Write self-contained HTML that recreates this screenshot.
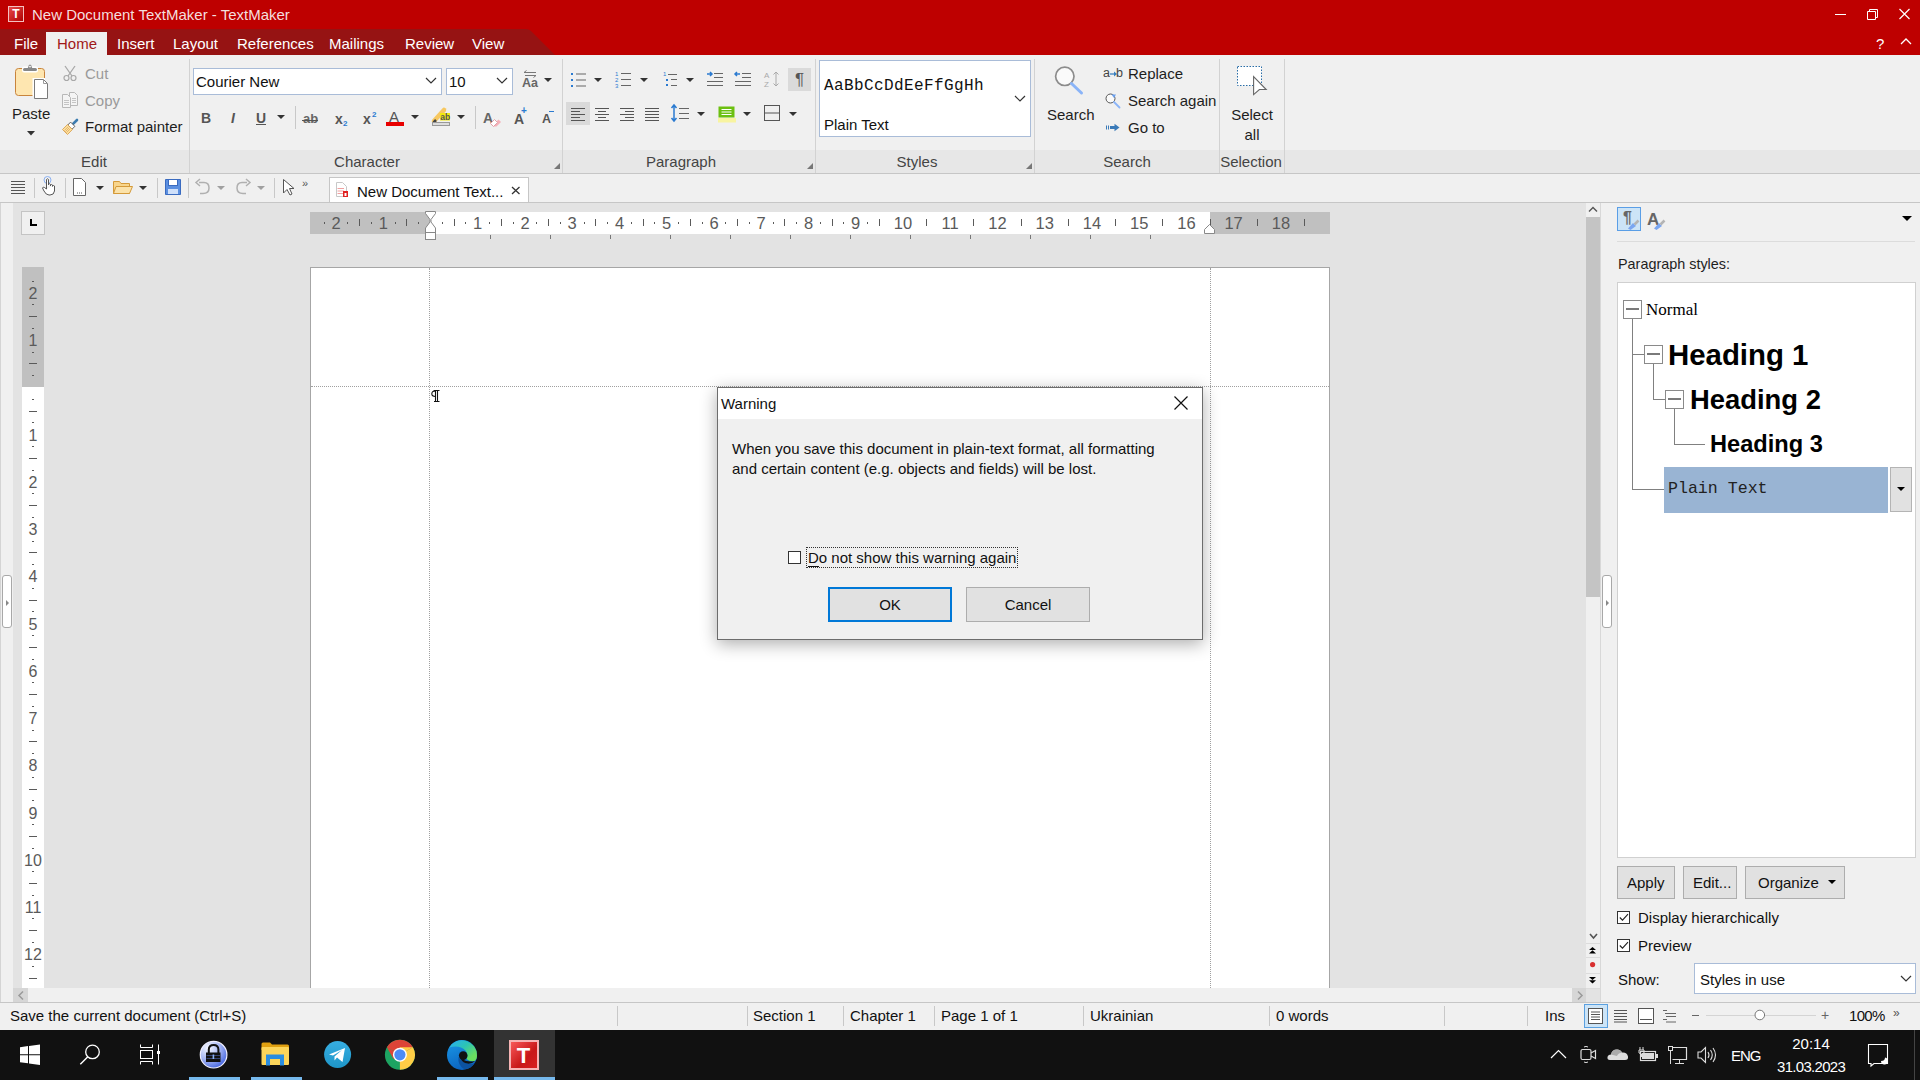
<!DOCTYPE html>
<html><head><meta charset="utf-8">
<style>
*{margin:0;padding:0;box-sizing:border-box}
html,body{width:1920px;height:1080px;overflow:hidden;background:#e3e3e3;font-family:"Liberation Sans",sans-serif;font-size:15px;color:#1e1e1e}
.a{position:absolute}
.t{position:absolute;white-space:nowrap;line-height:1}
svg{position:absolute;overflow:visible}
</style></head><body>
<!-- TITLE BAR -->
<div class="a" style="left:0;top:0;width:1920px;height:29px;background:#be0000"></div>
<!-- MENU ROW -->
<div class="a" style="left:0;top:29px;width:1920px;height:26px;background:#be0000"></div>
<svg style="left:0;top:29px" width="560" height="26"><path d="M0 0 H526 Q529 0 531 2 L555 26 H0Z" fill="#961313"/></svg>
<div class="a" style="left:46px;top:32px;width:61px;height:23px;background:#f0f0f0"></div>
<!-- RIBBON -->
<div class="a" style="left:0;top:55px;width:1920px;height:95px;background:#f0f0f0"></div>
<div class="a" style="left:0;top:150px;width:1920px;height:23px;background:#e7e7e7"></div>
<div class="a" style="left:0;top:173px;width:1920px;height:1px;background:#c6c6c6"></div>
<!-- QUICK TOOLBAR -->
<div class="a" style="left:0;top:174px;width:1920px;height:28px;background:#f0f0f0"></div>
<div class="a" style="left:0;top:202px;width:1920px;height:1px;background:#c6c6c6"></div>
<!-- STATUS BAR -->
<div class="a" style="left:0;top:1002px;width:1920px;height:1px;background:#c6c6c6"></div>
<div class="a" style="left:0;top:1003px;width:1920px;height:27px;background:#f0f0f0"></div>
<!-- TASKBAR -->
<div class="a" style="left:0;top:1030px;width:1920px;height:50px;background:#111111"></div>
<div class="a" style="left:8px;top:6px;width:16px;height:16px;background:linear-gradient(135deg,#e84a4a,#b00000);border:1px solid #f4c0c0"></div><div class="t" style="left:8px;top:8px;width:16px;text-align:center;font-size:12px;font-weight:bold;color:#fff">T</div>
<div class="t" style="left:32px;top:7.3px;font-size:15px;color:#f4dede;">New Document TextMaker - TextMaker</div>
<div class="t" style="left:14px;top:36.3px;font-size:15px;color:#ffffff;">File</div>
<div class="t" style="left:117px;top:36.3px;font-size:15px;color:#ffffff;">Insert</div>
<div class="t" style="left:173px;top:36.3px;font-size:15px;color:#ffffff;">Layout</div>
<div class="t" style="left:237px;top:36.3px;font-size:15px;color:#ffffff;">References</div>
<div class="t" style="left:329px;top:36.3px;font-size:15px;color:#ffffff;">Mailings</div>
<div class="t" style="left:405px;top:36.3px;font-size:15px;color:#ffffff;">Review</div>
<div class="t" style="left:472px;top:36.3px;font-size:15px;color:#ffffff;">View</div>
<div class="t" style="left:57px;top:36.3px;font-size:15px;color:#a01818;">Home</div>
<div class="t" style="left:1876px;top:36.3px;font-size:15px;color:#ffffff;">?</div>
<svg style="left:1830px;top:6px" width="90" height="20"><path d="M5 8.5H16" stroke="#fff" stroke-width="1"/><path d="M37.5 5.5h8v8h-8z M39.5 5.5v-2h8v8h-2" fill="none" stroke="#fff" stroke-width="1"/><path d="M69.5 3L79.5 13M79.5 3L69.5 13" stroke="#fff" stroke-width="1.2"/></svg>
<svg style="left:1900px;top:35px" width="20" height="12"><path d="M1 9L6 4L11 9" fill="none" stroke="#fff" stroke-width="1.3"/></svg>
<!-- RIBBON CONTENT -->
<div class="a" style="left:189px;top:59px;width:1px;height:114px;background:#d2d2d2"></div>
<div class="a" style="left:562px;top:59px;width:1px;height:114px;background:#d2d2d2"></div>
<div class="a" style="left:815px;top:59px;width:1px;height:114px;background:#d2d2d2"></div>
<div class="a" style="left:1034px;top:59px;width:1px;height:114px;background:#d2d2d2"></div>
<div class="a" style="left:1219px;top:59px;width:1px;height:114px;background:#d2d2d2"></div>
<div class="a" style="left:1284px;top:59px;width:1px;height:114px;background:#d2d2d2"></div>
<div class="t" style="left:-6.0px;top:154.3px;width:200px;text-align:center;font-size:15px;color:#444">Edit</div>
<div class="t" style="left:267.0px;top:154.3px;width:200px;text-align:center;font-size:15px;color:#444">Character</div>
<div class="t" style="left:581.0px;top:154.3px;width:200px;text-align:center;font-size:15px;color:#444">Paragraph</div>
<div class="t" style="left:817.0px;top:154.3px;width:200px;text-align:center;font-size:15px;color:#444">Styles</div>
<div class="t" style="left:1027.0px;top:154.3px;width:200px;text-align:center;font-size:15px;color:#444">Search</div>
<div class="t" style="left:1151.0px;top:154.3px;width:200px;text-align:center;font-size:15px;color:#444">Selection</div>
<svg style="left:553px;top:162px" width="8" height="8"><path d="M7 1V7H1Z" fill="#777"/></svg>
<svg style="left:806px;top:162px" width="8" height="8"><path d="M7 1V7H1Z" fill="#777"/></svg>
<svg style="left:1025px;top:162px" width="8" height="8"><path d="M7 1V7H1Z" fill="#777"/></svg>
<svg style="left:12px;top:62px" width="40" height="40">
<rect x="3.5" y="6.5" width="29" height="27" rx="3" fill="#fee6b0" stroke="#c8843c"/>
<rect x="10" y="4.5" width="16" height="6" rx="2" fill="#fff"/>
<rect x="11" y="6" width="14" height="3" rx="1.5" fill="#888"/><path d="M15.5 6.5L17 3.2Q18 2 19 3.2L20.5 6.5Z" fill="#888"/><circle cx="18" cy="4.6" r="0.9" fill="#fff"/>
<path d="M20.5 16H33V34.2H20.5Z" fill="#fff"/>
<path d="M22.5 17.5H31.5L35.5 21.5V36.5H22.5Z" fill="#fff" stroke="#7a7a7a"/><path d="M31.5 17.5V21.5H35.5" fill="none" stroke="#9a9a9a"/>
</svg>
<div class="t" style="left:12px;top:106.3px;font-size:15px;color:#1e1e1e;">Paste</div>
<svg style="left:27px;top:131px" width="8" height="5"><path d="M0 0H8L4 4.5Z" fill="#333"/></svg>
<svg style="left:62px;top:65px" width="16" height="16"><path d="M3 1L10 11M13 1L6 11" stroke="#a8a8a8" stroke-width="1.3" fill="none"/><circle cx="4.5" cy="13" r="2.5" fill="none" stroke="#a8a8a8" stroke-width="1.2"/><circle cx="11.5" cy="13" r="2.5" fill="none" stroke="#a8a8a8" stroke-width="1.2"/></svg>
<div class="t" style="left:85px;top:66.3px;font-size:15px;color:#9a9a9a;">Cut</div>
<svg style="left:62px;top:91px" width="18" height="18"><path d="M7.5 1.5H12.5L15.5 4.5V14.5H7.5Z" fill="#f4f4f4" stroke="#b8b8b8"/><path d="M0.5 3.5H5.5L8.5 6.5V16.5H0.5Z" fill="#f4f4f4" stroke="#b8b8b8"/><path d="M2 9.5H7M2 11.5H7M2 13.5H7M10 7.5H14M10 9.5H14M10 11.5H14" stroke="#c4c4c4"/></svg>
<div class="t" style="left:85px;top:93.3px;font-size:15px;color:#9a9a9a;">Copy</div>
<svg style="left:60px;top:118px" width="20" height="20"><path d="M17 2L12.8 6.2" stroke="#3c7cb0" stroke-width="2.6" stroke-linecap="round"/><path d="M10.6 4.1L14.9 8.4L12 11.2L7.8 7Z" fill="#fff" stroke="#555" stroke-width="0.9"/><path d="M7.5 6.6L12.4 11.5L7.5 16.5L2.5 11.5Z" fill="#fde2a0" stroke="#d9a050" stroke-width="0.9"/><path d="M8.2 8.7L4.3 12.6M9.2 9.8L5.3 13.7M10.3 10.8L6.4 14.7" stroke="#e0a860" stroke-width="0.8"/></svg>
<div class="t" style="left:85px;top:119.3px;font-size:15px;color:#1e1e1e;">Format painter</div>
<div class="a" style="left:193px;top:68px;width:249px;height:27px;background:#fff;border:1px solid #a9bcd8"></div>
<div class="t" style="left:196px;top:74.3px;font-size:15px;color:#111;">Courier New</div>
<svg style="left:425px;top:77px" width="12" height="8"><path d="M1 1L6 6L11 1" fill="none" stroke="#333" stroke-width="1.2"/></svg>
<div class="a" style="left:446px;top:68px;width:67px;height:27px;background:#fff;border:1px solid #a9bcd8"></div>
<div class="t" style="left:449px;top:74.3px;font-size:15px;color:#111;">10</div>
<svg style="left:496px;top:77px" width="12" height="8"><path d="M1 1L6 6L11 1" fill="none" stroke="#333" stroke-width="1.2"/></svg>
<div class="t" style="left:522px;top:76.5px;font-size:12.5px;font-weight:bold;color:#666">Aa</div><svg style="left:522px;top:70px" width="16" height="8"><path d="M2 2.5H14M2 2.5L4.5 0.5M3 5.5H14M14 5.5L11.5 7.5" stroke="#777" fill="none"/></svg>
<svg style="left:544px;top:78px" width="8" height="5"><path d="M0 0H8L4 4Z" fill="#333"/></svg>
<div class="t" style="left:201px;top:111px;font-size:14px;font-weight:bold;color:#555">B</div>
<div class="t" style="left:231px;top:111px;font-size:14px;font-weight:bold;font-style:italic;color:#555">I</div>
<div class="t" style="left:256px;top:111px;font-size:14px;font-weight:bold;color:#555">U</div><div class="a" style="left:256px;top:124px;width:10px;height:1px;background:#555"></div>
<svg style="left:277px;top:115px" width="8" height="5"><path d="M0 0H8L4 4Z" fill="#333"/></svg>
<svg style="left:411px;top:115px" width="8" height="5"><path d="M0 0H8L4 4Z" fill="#333"/></svg>
<svg style="left:457px;top:115px" width="8" height="5"><path d="M0 0H8L4 4Z" fill="#333"/></svg>
<div class="a" style="left:295px;top:106px;width:1px;height:23px;background:#c8c8c8"></div>
<div class="a" style="left:475px;top:106px;width:1px;height:23px;background:#c8c8c8"></div>
<div class="t" style="left:303px;top:112px;font-size:13px;font-weight:bold;color:#666">ab</div><div class="a" style="left:302px;top:120px;width:16px;height:1px;background:#555"></div>
<div class="t" style="left:335px;top:112px;font-size:14px;font-weight:bold;color:#555">x</div><div class="t" style="left:343px;top:120px;font-size:8px;font-weight:bold;color:#2a7ad0">2</div>
<div class="t" style="left:363px;top:112px;font-size:14px;font-weight:bold;color:#555">x</div><div class="t" style="left:372px;top:111px;font-size:8px;font-weight:bold;color:#2a7ad0">2</div>
<div class="t" style="left:389px;top:109px;font-size:15px;color:#555">A</div><div class="a" style="left:386px;top:122px;width:18px;height:3.5px;background:#e80000"></div>
<svg style="left:431px;top:107px" width="22" height="22"><path d="M3 14L13 3" stroke="#f7c860" stroke-width="4.5" stroke-linecap="round"/><path d="M2.5 15.5L5 13" stroke="#444" stroke-width="2.5"/><rect x="9" y="6" width="10" height="7.5" fill="#f2ea10"/><text x="9.2" y="12.8" font-size="8.5" font-weight="bold" font-family="Liberation Sans" fill="#555">ab</text><rect x="1.5" y="15.5" width="17" height="3" fill="#ddd" stroke="#999"/></svg>
<div class="t" style="left:483px;top:111px;font-size:14px;font-weight:bold;color:#666">A</div><svg style="left:488px;top:114px" width="14" height="14"><path d="M4.5 11.5L10.5 5.5L13 8L8.5 12.5H5.5Z" fill="#f4b0b8"/><path d="M2.5 9.5L6.5 5.5L9.5 8.5L5.5 12.5Z" fill="#fff" stroke="#e0a0a8"/></svg>
<div class="t" style="left:514px;top:112px;font-size:14px;font-weight:bold;color:#555">A</div><div class="t" style="left:521px;top:106px;font-size:10px;font-weight:bold;color:#2a7ad0">+</div>
<div class="t" style="left:542px;top:113px;font-size:12.5px;font-weight:bold;color:#555">A</div><div class="a" style="left:549px;top:111px;width:5px;height:1.2px;background:#2a7ad0"></div>
<!-- PARAGRAPH -->
<svg style="left:570px;top:72px" width="18" height="16"><g fill="#2a7ad0"><rect x="1" y="1" width="2" height="2"/><rect x="1" y="7" width="2" height="2"/><rect x="1" y="13" width="2" height="2"/></g><path d="M6 2H16M6 8H16M6 14H16" stroke="#666"/></svg>
<svg style="left:594px;top:78px" width="8" height="5"><path d="M0 0H8L4 4Z" fill="#333"/></svg>
<svg style="left:615px;top:70px" width="18" height="18"><text x="0" y="6" font-size="6" fill="#2a7ad0" font-family="Liberation Sans">1</text><text x="0" y="12" font-size="6" fill="#2a7ad0" font-family="Liberation Sans">2</text><text x="0" y="18" font-size="6" fill="#2a7ad0" font-family="Liberation Sans">3</text><path d="M6 3.5H16M6 9.5H16M6 15.5H16" stroke="#666"/></svg>
<svg style="left:640px;top:78px" width="8" height="5"><path d="M0 0H8L4 4Z" fill="#333"/></svg>
<svg style="left:662px;top:70px" width="18" height="18"><text x="1" y="6" font-size="6" fill="#2a7ad0" font-family="Liberation Sans">1</text><rect x="4" y="9" width="2" height="2" fill="#2a7ad0"/><rect x="4" y="14" width="2" height="2" fill="#2a7ad0"/><path d="M6 4.5H15M9 9.5H15M9 15.5H15" stroke="#666"/></svg>
<svg style="left:686px;top:78px" width="8" height="5"><path d="M0 0H8L4 4Z" fill="#333"/></svg>
<svg style="left:706px;top:71px" width="18" height="16"><path d="M1 3H6M4 1L6 3L4 5" stroke="#2a7ad0" stroke-width="1.5" fill="none"/><path d="M8 2.5H17M8 6.5H17M1 10.5H17M1 14.5H17" stroke="#666"/></svg>
<svg style="left:734px;top:71px" width="18" height="16"><path d="M6 3H1M3 1L1 3L3 5" stroke="#2a7ad0" stroke-width="1.5" fill="none"/><path d="M8 2.5H17M8 6.5H17M1 10.5H17M1 14.5H17" stroke="#666"/></svg>
<svg style="left:764px;top:70px" width="18" height="18"><text x="0" y="8" font-size="8" fill="#aaa" font-family="Liberation Sans">A</text><text x="0" y="17" font-size="8" fill="#aaa" font-family="Liberation Sans">Z</text><path d="M12 2V16M9.5 4.5L12 2L14.5 4.5M9.5 13.5L12 16L14.5 13.5" stroke="#aaa" fill="none"/></svg>
<div class="a" style="left:788px;top:68px;width:23px;height:23px;background:#dadada"></div>
<div class="t" style="left:795px;top:71px;font-size:17px;color:#555">&#182;</div>
<div class="a" style="left:566px;top:102px;width:24px;height:23px;background:#dadada"></div>
<svg style="left:571px;top:107px" width="14" height="14"><path d="M0 1.5H14M0 4.5H9M0 7.5H14M0 10.5H9M0 13.5H14" stroke="#555"/></svg>
<svg style="left:595px;top:107px" width="14" height="14"><path d="M0 1.5H14M3 4.5H11M0 7.5H14M3 10.5H11M0 13.5H14" stroke="#555"/></svg>
<svg style="left:620px;top:107px" width="14" height="14"><path d="M0 1.5H14M5 4.5H14M0 7.5H14M5 10.5H14M0 13.5H14" stroke="#555"/></svg>
<svg style="left:645px;top:107px" width="14" height="14"><path d="M0 1.5H14M0 4.5H14M0 7.5H14M0 10.5H14M0 13.5H14" stroke="#555"/></svg>
<svg style="left:670px;top:104px" width="20" height="18"><path d="M4 1V17M1.5 4L4 1L6.5 4M1.5 14L4 17L6.5 14" stroke="#2a7ad0" stroke-width="1.5" fill="none"/><path d="M9 4.5H19M9 9.5H19M9 14.5H19" stroke="#666"/></svg>
<svg style="left:697px;top:112px" width="8" height="5"><path d="M0 0H8L4 4Z" fill="#333"/></svg>
<svg style="left:717px;top:104px" width="20" height="20"><rect x="1.5" y="2.5" width="16" height="11" fill="#6cc010"/><path d="M4.5 5.5H14.5M4.5 8H14.5M4.5 10.5H14.5" stroke="#fff"/><rect x="1" y="14" width="18" height="4.5" fill="#f8f4a0"/></svg>
<svg style="left:743px;top:112px" width="8" height="5"><path d="M0 0H8L4 4Z" fill="#333"/></svg>
<svg style="left:764px;top:105px" width="18" height="18"><rect x="0.5" y="0.5" width="15" height="15" fill="none" stroke="#555"/><path d="M0.5 8H15.5" stroke="#555"/></svg>
<svg style="left:789px;top:112px" width="8" height="5"><path d="M0 0H8L4 4Z" fill="#333"/></svg>
<div class="a" style="left:819px;top:60px;width:212px;height:77px;background:#fff;border:1px solid #a9bcd8"></div>
<div class="t" style="left:824px;top:78.0px;font-size:16px;letter-spacing:0.4px;font-family:'Liberation Mono';color:#111">AaBbCcDdEeFfGgHh</div>
<div class="t" style="left:824px;top:117.3px;font-size:15px;color:#111;">Plain Text</div>
<svg style="left:1014px;top:95px" width="12" height="8"><path d="M1 1L6 6L11 1" fill="none" stroke="#333" stroke-width="1.2"/></svg>
<svg style="left:1050px;top:64px" width="36" height="36"><circle cx="14.8" cy="12.3" r="9.2" fill="#fafafa" stroke="#8c8c8c" stroke-width="1.7"/><path d="M21.5 19.5L31.5 29" stroke="#8ab4f8" stroke-width="3" stroke-linecap="round"/></svg>
<div class="t" style="left:1047px;top:107.3px;font-size:15px;color:#1e1e1e;">Search</div>
<div class="t" style="left:1103px;top:66.5px;font-size:12.5px;color:#444">a</div><svg style="left:1110px;top:70px" width="8" height="8"><path d="M0 4H5" stroke="#3a80c0" stroke-width="1.3"/><path d="M4 1.5L7 4L4 6.5Z" fill="#3a80c0"/></svg><div class="t" style="left:1116px;top:66.5px;font-size:12.5px;color:#444">b</div>
<div class="t" style="left:1128px;top:66.3px;font-size:15px;color:#1e1e1e;">Replace</div>
<svg style="left:1104px;top:92px" width="18" height="18"><circle cx="6.5" cy="6.5" r="4.5" fill="#fafafa" stroke="#555" stroke-width="1"/><path d="M10 10L15.5 15.5" stroke="#8ab4f8" stroke-width="1.8" stroke-linecap="round"/><path d="M7.5 2.5L12 2.5L10 6Z" fill="#6aa0f0"/></svg>
<div class="t" style="left:1128px;top:93.3px;font-size:15px;color:#1e1e1e;">Search again</div>
<svg style="left:1104px;top:122px" width="18" height="12"><path d="M2.5 3.5V7.5M4.5 3.5V7.5" stroke="#3a7ab8" stroke-width="1"/><path d="M6 5.5H11" stroke="#3a7ab8" stroke-width="3"/><path d="M10.5 1.8L15.5 5.5L10.5 9.2Z" fill="#3a7ab8"/></svg>
<div class="t" style="left:1128px;top:120.3px;font-size:15px;color:#1e1e1e;">Go to</div>
<svg style="left:1236px;top:65px" width="34" height="34"><rect x="1.5" y="1.5" width="24" height="19" fill="#fff" stroke="#2a6ea8" stroke-dasharray="1.5 1.5"/><path d="M17.6 11.7V29.6L23.4 24.5H30.2Z" fill="#fff" stroke="#666" stroke-width="1.1" stroke-linejoin="miter"/></svg>
<div class="t" style="left:1221px;top:107.3px;width:62px;text-align:center;font-size:15px">Select</div>
<div class="t" style="left:1221px;top:127.3px;width:62px;text-align:center;font-size:15px">all</div>
<!-- QUICK TOOLBAR -->
<svg style="left:11px;top:180px" width="14" height="14"><path d="M0 1.5H14M0 4.5H14M0 7.5H14M0 10.5H14M0 13.5H14" stroke="#555"/></svg>
<div class="a" style="left:34px;top:178px;width:1px;height:20px;background:#c8c8c8"></div>
<div class="a" style="left:65px;top:178px;width:1px;height:20px;background:#c8c8c8"></div>
<div class="a" style="left:157px;top:178px;width:1px;height:20px;background:#c8c8c8"></div>
<div class="a" style="left:188px;top:178px;width:1px;height:20px;background:#c8c8c8"></div>
<div class="a" style="left:274px;top:178px;width:1px;height:20px;background:#c8c8c8"></div>
<svg style="left:41px;top:176px" width="16" height="20"><circle cx="6.5" cy="4" r="3.5" fill="none" stroke="#8ab0f0" stroke-width="1"/><path d="M5.5 13V3.5Q6.5 2 7.5 3.5V9M7.5 8.5Q8.5 7 9.5 8.5V10M9.5 9Q10.5 8 11.5 9V10.5M11.5 10Q12.5 9 13.5 10V15Q13 19 9 19H8Q5 19 3 15L1.5 12Q2 10.5 3.5 11.5L5.5 13" fill="#fff" stroke="#555" stroke-width="1"/></svg>
<svg style="left:73px;top:178px" width="14" height="18"><path d="M0.5 0.5H8.5L12.5 4.5V17.5H0.5Z" fill="#fff" stroke="#666"/><path d="M4 15H5M6 15H7M8 15H9" stroke="#555"/></svg>
<svg style="left:96px;top:186px" width="8" height="5"><path d="M0 0H8L4 4Z" fill="#333"/></svg>
<svg style="left:113px;top:179px" width="20" height="16"><path d="M0.5 2.5H6.5L8 4.5H16.5V14.5H0.5Z" fill="#f8d58c" stroke="#d49a3a"/><path d="M3 7.5H19.5L16.5 14.5H0.5Z" fill="#fbe2a9" stroke="#d49a3a"/></svg>
<svg style="left:139px;top:186px" width="8" height="5"><path d="M0 0H8L4 4Z" fill="#333"/></svg>
<svg style="left:165px;top:179px" width="16" height="16"><path d="M0.5 0.5H15.5V15.5H0.5Z" fill="#5b8fe0" stroke="#3a6bc0"/><rect x="3.5" y="0.5" width="9" height="6" fill="#fff" stroke="#3a6bc0"/><rect x="3" y="10" width="10" height="5" fill="#cfe0fa"/></svg>
<svg style="left:194px;top:178px" width="18" height="18"><path d="M5 4.5H10Q15 4.5 15 10Q15 15.5 9 15.5H6" fill="none" stroke="#b0b0b0" stroke-width="1.5"/><path d="M6 1L2 4.5L6 8" fill="none" stroke="#b0b0b0" stroke-width="1.5"/></svg>
<svg style="left:217px;top:186px" width="8" height="5"><path d="M0 0H8L4 4Z" fill="#a0a0a0"/></svg>
<svg style="left:234px;top:178px" width="18" height="18"><path d="M13 4.5H8Q3 4.5 3 10Q3 15.5 9 15.5H12" fill="none" stroke="#b0b0b0" stroke-width="1.5"/><path d="M12 1L16 4.5L12 8" fill="none" stroke="#b0b0b0" stroke-width="1.5"/></svg>
<svg style="left:257px;top:186px" width="8" height="5"><path d="M0 0H8L4 4Z" fill="#a0a0a0"/></svg>
<svg style="left:282px;top:178px" width="14" height="18"><path d="M1.5 1.5V15L5 11.5L8 17L10 16L7.5 10.5H12Z" fill="#fff" stroke="#555"/></svg>
<div class="t" style="left:302px;top:178px;font-size:11px;color:#555">&#187;</div>
<div class="a" style="left:329px;top:177px;width:200px;height:25px;background:#fff;border:1px solid #c6c6c6;border-bottom:none"></div>
<svg style="left:335px;top:182px" width="16" height="18"><path d="M1.5 0.5H7.5L11.5 4.5V14.5H1.5Z" fill="#fff" stroke="#c8c8c8"/><path d="M2.5 6.5H9M2.5 9H9M2.5 11.5H8" stroke="#f0a0a0"/><rect x="8" y="9" width="5" height="6" fill="#e02020"/><rect x="9.5" y="11" width="2" height="3" fill="#fff"/></svg>
<div class="t" style="left:357px;top:184.3px;font-size:15px;color:#111;">New Document Text...</div>
<svg style="left:511px;top:186px" width="10" height="10"><path d="M1 1L8.5 8M8.5 1L1 8" stroke="#333" stroke-width="1.3"/></svg>
<!-- WORKSPACE -->
<div class="a" style="left:0;top:203px;width:13px;height:799px;background:#f0f0f0;border-left:1px solid #d4d4d4"></div>
<div class="a" style="left:2px;top:575px;width:10px;height:53px;background:#fff;border:1px solid #a8a8a8;border-radius:3px"></div>
<svg style="left:6px;top:600px" width="4" height="6"><path d="M0 0L3 3L0 6Z" fill="#888"/></svg>
<div class="a" style="left:21px;top:211px;width:24px;height:24px;background:#f0f0f0;border:1px solid #c4c4c4"></div>
<svg style="left:30px;top:219px" width="8" height="8"><path d="M1 0V6H7" fill="none" stroke="#000" stroke-width="2"/></svg>
<div class="a" style="left:310px;top:212px;width:1020px;height:22px;background:#c0c0c0"></div>
<div class="a" style="left:430px;top:212px;width:780px;height:22px;background:#fff"></div>
<div class="t" style="left:321.0px;top:214.5px;width:30px;text-align:center;font-size:16.5px;color:#5a5a5a">2</div>
<div class="t" style="left:368.3px;top:214.5px;width:30px;text-align:center;font-size:16.5px;color:#5a5a5a">1</div>
<div class="t" style="left:462.7px;top:214.5px;width:30px;text-align:center;font-size:16.5px;color:#5a5a5a">1</div>
<div class="t" style="left:510.0px;top:214.5px;width:30px;text-align:center;font-size:16.5px;color:#5a5a5a">2</div>
<div class="t" style="left:557.2px;top:214.5px;width:30px;text-align:center;font-size:16.5px;color:#5a5a5a">3</div>
<div class="t" style="left:604.5px;top:214.5px;width:30px;text-align:center;font-size:16.5px;color:#5a5a5a">4</div>
<div class="t" style="left:651.7px;top:214.5px;width:30px;text-align:center;font-size:16.5px;color:#5a5a5a">5</div>
<div class="t" style="left:699.0px;top:214.5px;width:30px;text-align:center;font-size:16.5px;color:#5a5a5a">6</div>
<div class="t" style="left:746.2px;top:214.5px;width:30px;text-align:center;font-size:16.5px;color:#5a5a5a">7</div>
<div class="t" style="left:793.5px;top:214.5px;width:30px;text-align:center;font-size:16.5px;color:#5a5a5a">8</div>
<div class="t" style="left:840.7px;top:214.5px;width:30px;text-align:center;font-size:16.5px;color:#5a5a5a">9</div>
<div class="t" style="left:887.9px;top:214.5px;width:30px;text-align:center;font-size:16.5px;color:#5a5a5a">10</div>
<div class="t" style="left:935.2px;top:214.5px;width:30px;text-align:center;font-size:16.5px;color:#5a5a5a">11</div>
<div class="t" style="left:982.4px;top:214.5px;width:30px;text-align:center;font-size:16.5px;color:#5a5a5a">12</div>
<div class="t" style="left:1029.7px;top:214.5px;width:30px;text-align:center;font-size:16.5px;color:#5a5a5a">13</div>
<div class="t" style="left:1076.9px;top:214.5px;width:30px;text-align:center;font-size:16.5px;color:#5a5a5a">14</div>
<div class="t" style="left:1124.2px;top:214.5px;width:30px;text-align:center;font-size:16.5px;color:#5a5a5a">15</div>
<div class="t" style="left:1171.4px;top:214.5px;width:30px;text-align:center;font-size:16.5px;color:#5a5a5a">16</div>
<div class="t" style="left:1218.6px;top:214.5px;width:30px;text-align:center;font-size:16.5px;color:#5a5a5a">17</div>
<div class="t" style="left:1265.9px;top:214.5px;width:30px;text-align:center;font-size:16.5px;color:#5a5a5a">18</div>
<div class="a" style="left:324px;top:222px;width:1px;height:2px;background:#5a5a5a"></div>
<div class="a" style="left:347px;top:222px;width:1px;height:2px;background:#5a5a5a"></div>
<div class="a" style="left:359px;top:219px;width:1px;height:7px;background:#5a5a5a"></div>
<div class="a" style="left:371px;top:222px;width:1px;height:2px;background:#5a5a5a"></div>
<div class="a" style="left:395px;top:222px;width:1px;height:2px;background:#5a5a5a"></div>
<div class="a" style="left:406px;top:219px;width:1px;height:7px;background:#5a5a5a"></div>
<div class="a" style="left:418px;top:222px;width:1px;height:2px;background:#5a5a5a"></div>
<div class="a" style="left:442px;top:222px;width:1px;height:2px;background:#5a5a5a"></div>
<div class="a" style="left:454px;top:219px;width:1px;height:7px;background:#5a5a5a"></div>
<div class="a" style="left:465px;top:222px;width:1px;height:2px;background:#5a5a5a"></div>
<div class="a" style="left:489px;top:222px;width:1px;height:2px;background:#5a5a5a"></div>
<div class="a" style="left:501px;top:219px;width:1px;height:7px;background:#5a5a5a"></div>
<div class="a" style="left:513px;top:222px;width:1px;height:2px;background:#5a5a5a"></div>
<div class="a" style="left:536px;top:222px;width:1px;height:2px;background:#5a5a5a"></div>
<div class="a" style="left:548px;top:219px;width:1px;height:7px;background:#5a5a5a"></div>
<div class="a" style="left:560px;top:222px;width:1px;height:2px;background:#5a5a5a"></div>
<div class="a" style="left:584px;top:222px;width:1px;height:2px;background:#5a5a5a"></div>
<div class="a" style="left:595px;top:219px;width:1px;height:7px;background:#5a5a5a"></div>
<div class="a" style="left:607px;top:222px;width:1px;height:2px;background:#5a5a5a"></div>
<div class="a" style="left:631px;top:222px;width:1px;height:2px;background:#5a5a5a"></div>
<div class="a" style="left:643px;top:219px;width:1px;height:7px;background:#5a5a5a"></div>
<div class="a" style="left:654px;top:222px;width:1px;height:2px;background:#5a5a5a"></div>
<div class="a" style="left:678px;top:222px;width:1px;height:2px;background:#5a5a5a"></div>
<div class="a" style="left:690px;top:219px;width:1px;height:7px;background:#5a5a5a"></div>
<div class="a" style="left:702px;top:222px;width:1px;height:2px;background:#5a5a5a"></div>
<div class="a" style="left:725px;top:222px;width:1px;height:2px;background:#5a5a5a"></div>
<div class="a" style="left:737px;top:219px;width:1px;height:7px;background:#5a5a5a"></div>
<div class="a" style="left:749px;top:222px;width:1px;height:2px;background:#5a5a5a"></div>
<div class="a" style="left:773px;top:222px;width:1px;height:2px;background:#5a5a5a"></div>
<div class="a" style="left:784px;top:219px;width:1px;height:7px;background:#5a5a5a"></div>
<div class="a" style="left:796px;top:222px;width:1px;height:2px;background:#5a5a5a"></div>
<div class="a" style="left:820px;top:222px;width:1px;height:2px;background:#5a5a5a"></div>
<div class="a" style="left:832px;top:219px;width:1px;height:7px;background:#5a5a5a"></div>
<div class="a" style="left:843px;top:222px;width:1px;height:2px;background:#5a5a5a"></div>
<div class="a" style="left:867px;top:222px;width:1px;height:2px;background:#5a5a5a"></div>
<div class="a" style="left:879px;top:219px;width:1px;height:7px;background:#5a5a5a"></div>
<div class="a" style="left:926px;top:219px;width:1px;height:7px;background:#5a5a5a"></div>
<div class="a" style="left:973px;top:219px;width:1px;height:7px;background:#5a5a5a"></div>
<div class="a" style="left:1021px;top:219px;width:1px;height:7px;background:#5a5a5a"></div>
<div class="a" style="left:1068px;top:219px;width:1px;height:7px;background:#5a5a5a"></div>
<div class="a" style="left:1115px;top:219px;width:1px;height:7px;background:#5a5a5a"></div>
<div class="a" style="left:1162px;top:219px;width:1px;height:7px;background:#5a5a5a"></div>
<div class="a" style="left:1210px;top:219px;width:1px;height:7px;background:#5a5a5a"></div>
<div class="a" style="left:1257px;top:219px;width:1px;height:7px;background:#5a5a5a"></div>
<div class="a" style="left:1304px;top:219px;width:1px;height:7px;background:#5a5a5a"></div>
<div class="a" style="left:490px;top:235px;width:1px;height:4px;background:#777"></div>
<div class="a" style="left:550px;top:235px;width:1px;height:4px;background:#777"></div>
<div class="a" style="left:610px;top:235px;width:1px;height:4px;background:#777"></div>
<div class="a" style="left:670px;top:235px;width:1px;height:4px;background:#777"></div>
<div class="a" style="left:730px;top:235px;width:1px;height:4px;background:#777"></div>
<div class="a" style="left:790px;top:235px;width:1px;height:4px;background:#777"></div>
<div class="a" style="left:850px;top:235px;width:1px;height:4px;background:#777"></div>
<div class="a" style="left:910px;top:235px;width:1px;height:4px;background:#777"></div>
<div class="a" style="left:970px;top:235px;width:1px;height:4px;background:#777"></div>
<div class="a" style="left:1030px;top:235px;width:1px;height:4px;background:#777"></div>
<div class="a" style="left:1090px;top:235px;width:1px;height:4px;background:#777"></div>
<div class="a" style="left:1150px;top:235px;width:1px;height:4px;background:#777"></div>
<svg style="left:425px;top:210px" width="12" height="32"><path d="M0.5 1.5H10.5V3.5L6 9.5V12L10.5 18V22.5H0.5V18L5 12V9.5L0.5 3.5Z" fill="#fff" stroke="#888"/><rect x="0.5" y="22.5" width="10" height="7" fill="#fff" stroke="#888"/></svg>
<svg style="left:1204px;top:224px" width="12" height="12"><path d="M5.5 0.5L10.5 5.5V9.5H0.5V5.5Z" fill="#fff" stroke="#888"/></svg>
<div class="a" style="left:22px;top:267px;width:22px;height:120px;background:#c0c0c0"></div>
<div class="a" style="left:22px;top:387px;width:22px;height:601px;background:#fff"></div>
<div class="t" style="left:20px;top:285.9px;width:26px;text-align:center;font-size:16px;color:#5a5a5a">2</div>
<div class="t" style="left:20px;top:333.2px;width:26px;text-align:center;font-size:16px;color:#5a5a5a">1</div>
<div class="t" style="left:20px;top:427.6px;width:26px;text-align:center;font-size:16px;color:#5a5a5a">1</div>
<div class="t" style="left:20px;top:474.9px;width:26px;text-align:center;font-size:16px;color:#5a5a5a">2</div>
<div class="t" style="left:20px;top:522.1px;width:26px;text-align:center;font-size:16px;color:#5a5a5a">3</div>
<div class="t" style="left:20px;top:569.4px;width:26px;text-align:center;font-size:16px;color:#5a5a5a">4</div>
<div class="t" style="left:20px;top:616.6px;width:26px;text-align:center;font-size:16px;color:#5a5a5a">5</div>
<div class="t" style="left:20px;top:663.9px;width:26px;text-align:center;font-size:16px;color:#5a5a5a">6</div>
<div class="t" style="left:20px;top:711.1px;width:26px;text-align:center;font-size:16px;color:#5a5a5a">7</div>
<div class="t" style="left:20px;top:758.4px;width:26px;text-align:center;font-size:16px;color:#5a5a5a">8</div>
<div class="t" style="left:20px;top:805.6px;width:26px;text-align:center;font-size:16px;color:#5a5a5a">9</div>
<div class="t" style="left:20px;top:852.8px;width:26px;text-align:center;font-size:16px;color:#5a5a5a">10</div>
<div class="t" style="left:20px;top:900.1px;width:26px;text-align:center;font-size:16px;color:#5a5a5a">11</div>
<div class="t" style="left:20px;top:947.3px;width:26px;text-align:center;font-size:16px;color:#5a5a5a">12</div>
<div class="a" style="left:32px;top:281px;width:2px;height:1px;background:#5a5a5a"></div>
<div class="a" style="left:32px;top:304px;width:2px;height:1px;background:#5a5a5a"></div>
<div class="a" style="left:29px;top:316px;width:8px;height:1px;background:#5a5a5a"></div>
<div class="a" style="left:32px;top:328px;width:2px;height:1px;background:#5a5a5a"></div>
<div class="a" style="left:32px;top:352px;width:2px;height:1px;background:#5a5a5a"></div>
<div class="a" style="left:29px;top:363px;width:8px;height:1px;background:#5a5a5a"></div>
<div class="a" style="left:32px;top:375px;width:2px;height:1px;background:#5a5a5a"></div>
<div class="a" style="left:32px;top:399px;width:2px;height:1px;background:#5a5a5a"></div>
<div class="a" style="left:29px;top:411px;width:8px;height:1px;background:#5a5a5a"></div>
<div class="a" style="left:32px;top:422px;width:2px;height:1px;background:#5a5a5a"></div>
<div class="a" style="left:32px;top:446px;width:2px;height:1px;background:#5a5a5a"></div>
<div class="a" style="left:29px;top:458px;width:8px;height:1px;background:#5a5a5a"></div>
<div class="a" style="left:32px;top:470px;width:2px;height:1px;background:#5a5a5a"></div>
<div class="a" style="left:32px;top:493px;width:2px;height:1px;background:#5a5a5a"></div>
<div class="a" style="left:29px;top:505px;width:8px;height:1px;background:#5a5a5a"></div>
<div class="a" style="left:32px;top:517px;width:2px;height:1px;background:#5a5a5a"></div>
<div class="a" style="left:32px;top:541px;width:2px;height:1px;background:#5a5a5a"></div>
<div class="a" style="left:29px;top:552px;width:8px;height:1px;background:#5a5a5a"></div>
<div class="a" style="left:32px;top:564px;width:2px;height:1px;background:#5a5a5a"></div>
<div class="a" style="left:32px;top:588px;width:2px;height:1px;background:#5a5a5a"></div>
<div class="a" style="left:29px;top:600px;width:8px;height:1px;background:#5a5a5a"></div>
<div class="a" style="left:32px;top:611px;width:2px;height:1px;background:#5a5a5a"></div>
<div class="a" style="left:32px;top:635px;width:2px;height:1px;background:#5a5a5a"></div>
<div class="a" style="left:29px;top:647px;width:8px;height:1px;background:#5a5a5a"></div>
<div class="a" style="left:32px;top:659px;width:2px;height:1px;background:#5a5a5a"></div>
<div class="a" style="left:32px;top:682px;width:2px;height:1px;background:#5a5a5a"></div>
<div class="a" style="left:29px;top:694px;width:8px;height:1px;background:#5a5a5a"></div>
<div class="a" style="left:32px;top:706px;width:2px;height:1px;background:#5a5a5a"></div>
<div class="a" style="left:32px;top:730px;width:2px;height:1px;background:#5a5a5a"></div>
<div class="a" style="left:29px;top:741px;width:8px;height:1px;background:#5a5a5a"></div>
<div class="a" style="left:32px;top:753px;width:2px;height:1px;background:#5a5a5a"></div>
<div class="a" style="left:32px;top:777px;width:2px;height:1px;background:#5a5a5a"></div>
<div class="a" style="left:29px;top:789px;width:8px;height:1px;background:#5a5a5a"></div>
<div class="a" style="left:32px;top:800px;width:2px;height:1px;background:#5a5a5a"></div>
<div class="a" style="left:32px;top:824px;width:2px;height:1px;background:#5a5a5a"></div>
<div class="a" style="left:29px;top:836px;width:8px;height:1px;background:#5a5a5a"></div>
<div class="a" style="left:32px;top:848px;width:2px;height:1px;background:#5a5a5a"></div>
<div class="a" style="left:32px;top:871px;width:2px;height:1px;background:#5a5a5a"></div>
<div class="a" style="left:29px;top:883px;width:8px;height:1px;background:#5a5a5a"></div>
<div class="a" style="left:32px;top:895px;width:2px;height:1px;background:#5a5a5a"></div>
<div class="a" style="left:32px;top:918px;width:2px;height:1px;background:#5a5a5a"></div>
<div class="a" style="left:29px;top:930px;width:8px;height:1px;background:#5a5a5a"></div>
<div class="a" style="left:32px;top:942px;width:2px;height:1px;background:#5a5a5a"></div>
<div class="a" style="left:32px;top:966px;width:2px;height:1px;background:#5a5a5a"></div>
<div class="a" style="left:29px;top:978px;width:8px;height:1px;background:#5a5a5a"></div>
<div class="a" style="left:32px;top:989px;width:2px;height:1px;background:#5a5a5a"></div>
<div class="a" style="left:310px;top:267px;width:1020px;height:721px;background:#fff;border:1px solid #a6a6a6;border-bottom:none"></div>
<div class="a" style="left:429px;top:268px;width:0;height:720px;border-left:1px dotted #a0a0a0"></div>
<div class="a" style="left:1210px;top:268px;width:0;height:720px;border-left:1px dotted #a0a0a0"></div>
<div class="a" style="left:311px;top:386px;width:1018px;height:0;border-top:1px dotted #a0a0a0"></div>
<svg style="left:430px;top:389px" width="12" height="14"><path d="M3.5 1.5H9.5M4 12.5H9.5M5.5 1.5V12.5M7.5 1.5V12.5M5.5 2Q1.8 2 1.8 4.8Q1.8 7.5 5.5 7.5" fill="none" stroke="#111" stroke-width="1.1"/></svg>
<div class="a" style="left:13px;top:988px;width:1573px;height:14px;background:#f0f0f0"></div>
<div class="a" style="left:13px;top:988px;width:15px;height:14px;background:#d6d6d6"></div>
<svg style="left:17px;top:991px" width="8" height="9"><path d="M6 0.5L2 4.5L6 8.5" fill="none" stroke="#999" stroke-width="1.5"/></svg>
<div class="a" style="left:1572px;top:988px;width:14px;height:14px;background:#d6d6d6"></div>
<svg style="left:1576px;top:991px" width="8" height="9"><path d="M2 0.5L6 4.5L2 8.5" fill="none" stroke="#999" stroke-width="1.5"/></svg>
<div class="a" style="left:1586px;top:203px;width:14px;height:785px;background:#f0f0f0"></div>
<div class="a" style="left:1586px;top:217px;width:14px;height:380px;background:#c4c4c4"></div>
<svg style="left:1588px;top:206px" width="10" height="7"><path d="M1 5.5L5 1.5L9 5.5" fill="none" stroke="#555" stroke-width="1.4"/></svg>
<svg style="left:1589px;top:933px" width="10" height="7"><path d="M1 1L4.5 5L8 1" fill="none" stroke="#555" stroke-width="1.6"/></svg>
<div class="a" style="left:1586px;top:943px;width:14px;height:1px;background:#dcdcdc"></div>
<div class="a" style="left:1586px;top:957px;width:14px;height:1px;background:#dcdcdc"></div>
<div class="a" style="left:1586px;top:973px;width:14px;height:1px;background:#dcdcdc"></div>
<div class="a" style="left:1586px;top:988px;width:14px;height:1px;background:#dcdcdc"></div>
<svg style="left:1589px;top:947px" width="8" height="8"><path d="M3.5 0L7 3H0Z M3.5 3.2L7 6.5H0Z" fill="#000"/></svg>
<svg style="left:1589px;top:961px" width="8" height="8"><circle cx="3.6" cy="3.6" r="2.6" fill="#d83030"/></svg>
<svg style="left:1589px;top:977px" width="8" height="8"><path d="M0 0H7L3.5 3Z M0 3.3H7L3.5 6.5Z" fill="#000"/></svg>
<div class="a" style="left:1600px;top:203px;width:14px;height:799px;background:#f0f0f0;border-left:1px solid #d8d8d8"></div>
<div class="a" style="left:1602px;top:575px;width:10px;height:53px;background:#fff;border:1px solid #a8a8a8;border-radius:3px"></div>
<svg style="left:1606px;top:600px" width="4" height="6"><path d="M0 0L3 3L0 6Z" fill="#888"/></svg>
<div class="a" style="left:1614px;top:203px;width:306px;height:799px;background:#f0f0f0"></div>
<!-- RIGHT PANEL -->
<div class="a" style="left:1617px;top:207px;width:24px;height:24px;background:#cce4f7;border:1px solid #5a9ee6"></div>
<div class="t" style="left:1623px;top:210px;font-size:16px;font-weight:bold;color:#666">&#182;</div>
<svg style="left:1626px;top:217px" width="14" height="14"><path d="M2 11.5L7 6L10 9L4.5 13Z" fill="#7aa6f0"/><path d="M8.5 7.5L12.5 3.5" stroke="#b4b4b4" stroke-width="2.5"/></svg>
<div class="t" style="left:1647px;top:211px;font-size:17px;font-weight:bold;color:#666">A</div>
<svg style="left:1652px;top:217px" width="14" height="14"><path d="M2 11.5L7 6L10 9L4.5 13Z" fill="#7aa6f0"/><path d="M8.5 7.5L12.5 3.5" stroke="#b4b4b4" stroke-width="2.5"/></svg>
<svg style="left:1902px;top:216px" width="10" height="6"><path d="M0 0H10L5 5Z" fill="#000"/></svg>
<div class="a" style="left:1617px;top:241px;width:298px;height:1px;background:#dcdcdc"></div>
<div class="t" style="left:1618px;top:256.8px;font-size:14.4px;color:#1e1e1e;">Paragraph styles:</div>
<div class="a" style="left:1617px;top:282px;width:299px;height:576px;background:#fff;border:1px solid #d0d0d0"></div>
<div class="a" style="left:1632px;top:319px;width:1px;height:171px;background:#808080"></div>
<div class="a" style="left:1632px;top:354px;width:12px;height:1px;background:#808080"></div>
<div class="a" style="left:1632px;top:489px;width:32px;height:1px;background:#808080"></div>
<div class="a" style="left:1653px;top:364px;width:1px;height:36px;background:#808080"></div>
<div class="a" style="left:1653px;top:399px;width:12px;height:1px;background:#808080"></div>
<div class="a" style="left:1674px;top:409px;width:1px;height:36px;background:#808080"></div>
<div class="a" style="left:1674px;top:444px;width:31px;height:1px;background:#808080"></div>
<div class="a" style="left:1623px;top:300px;width:19px;height:19px;background:#fff;border:1px solid #8a8a8a"></div><div class="a" style="left:1626px;top:308px;width:13px;height:2px;background:#7a7a7a"></div>
<div class="a" style="left:1644px;top:345px;width:19px;height:19px;background:#fff;border:1px solid #8a8a8a"></div><div class="a" style="left:1647px;top:353px;width:13px;height:2px;background:#7a7a7a"></div>
<div class="a" style="left:1665px;top:390px;width:19px;height:19px;background:#fff;border:1px solid #8a8a8a"></div><div class="a" style="left:1668px;top:398px;width:13px;height:2px;background:#7a7a7a"></div>
<div class="t" style="left:1646px;top:300.6px;font-size:17px;color:#000;font-family:'Liberation Serif'">Normal</div>
<div class="t" style="left:1668px;top:340.1px;font-size:29.4px;color:#000;font-weight:bold">Heading 1</div>
<div class="t" style="left:1690px;top:385.8px;font-size:27.4px;color:#000;font-weight:bold">Heading 2</div>
<div class="t" style="left:1710px;top:433.0px;font-size:23.6px;color:#000;font-weight:bold">Heading 3</div>
<div class="a" style="left:1664px;top:467px;width:224px;height:46px;background:#99b4d3"></div>
<div class="t" style="left:1668px;top:481.4px;font-size:16.6px;color:#222;font-family:'Liberation Mono'">Plain Text</div>
<div class="a" style="left:1890px;top:467px;width:22px;height:45px;background:#e1e1e1;border:1px solid #b4b4b4"></div>
<svg style="left:1897px;top:487px" width="8" height="5"><path d="M0 0H8L4 4Z" fill="#000"/></svg>
<div class="a" style="left:1617px;top:866px;width:58px;height:33px;background:#e1e1e1;border:1px solid #adadad"></div>
<div class="t" style="left:1627px;top:875.3px;font-size:15px;color:#111;">Apply</div>
<div class="a" style="left:1683px;top:866px;width:54px;height:33px;background:#e1e1e1;border:1px solid #adadad"></div>
<div class="t" style="left:1693px;top:875.3px;font-size:15px;color:#111;">Edit...</div>
<div class="a" style="left:1745px;top:866px;width:100px;height:33px;background:#e1e1e1;border:1px solid #adadad"></div>
<div class="t" style="left:1758px;top:875.3px;font-size:15px;color:#111;">Organize</div>
<svg style="left:1828px;top:880px" width="8" height="5"><path d="M0 0H8L4 4Z" fill="#000"/></svg>
<div class="a" style="left:1617px;top:911px;width:13px;height:13px;background:#fff;border:1px solid #333"></div><svg style="left:1619px;top:913px" width="10" height="9"><path d="M0.8 4.5L3.5 7.2L9 1.2" fill="none" stroke="#222" stroke-width="1.1"/></svg>
<div class="a" style="left:1617px;top:939px;width:13px;height:13px;background:#fff;border:1px solid #333"></div><svg style="left:1619px;top:941px" width="10" height="9"><path d="M0.8 4.5L3.5 7.2L9 1.2" fill="none" stroke="#222" stroke-width="1.1"/></svg>
<div class="t" style="left:1638px;top:910.3px;font-size:15px;color:#111;">Display hierarchically</div>
<div class="t" style="left:1638px;top:938.3px;font-size:15px;color:#111;">Preview</div>
<div class="t" style="left:1618px;top:972.3px;font-size:15px;color:#111;">Show:</div>
<div class="a" style="left:1694px;top:963px;width:222px;height:31px;background:#fff;border:1px solid #a9bcd8"></div>
<div class="t" style="left:1700px;top:972.3px;font-size:15px;color:#111;">Styles in use</div>
<svg style="left:1900px;top:975px" width="12" height="8"><path d="M1 1L6 6L11 1" fill="none" stroke="#333" stroke-width="1.2"/></svg>
<!-- STATUS BAR -->
<div class="t" style="left:10px;top:1008.3px;font-size:15px;color:#111;">Save the current document (Ctrl+S)</div>
<div class="a" style="left:617px;top:1006px;width:1px;height:20px;background:#c8c8c8"></div>
<div class="a" style="left:747px;top:1006px;width:1px;height:20px;background:#c8c8c8"></div>
<div class="a" style="left:843px;top:1006px;width:1px;height:20px;background:#c8c8c8"></div>
<div class="a" style="left:934px;top:1006px;width:1px;height:20px;background:#c8c8c8"></div>
<div class="a" style="left:1083px;top:1006px;width:1px;height:20px;background:#c8c8c8"></div>
<div class="a" style="left:1269px;top:1006px;width:1px;height:20px;background:#c8c8c8"></div>
<div class="a" style="left:1444px;top:1006px;width:1px;height:20px;background:#c8c8c8"></div>
<div class="a" style="left:1527px;top:1006px;width:1px;height:20px;background:#c8c8c8"></div>
<div class="t" style="left:753px;top:1008.3px;font-size:15px;color:#111;">Section 1</div>
<div class="t" style="left:850px;top:1008.3px;font-size:15px;color:#111;">Chapter 1</div>
<div class="t" style="left:941px;top:1008.3px;font-size:15px;color:#111;">Page 1 of 1</div>
<div class="t" style="left:1090px;top:1008.3px;font-size:15px;color:#111;">Ukrainian</div>
<div class="t" style="left:1276px;top:1008.3px;font-size:15px;color:#111;">0 words</div>
<div class="t" style="left:1545px;top:1008.3px;font-size:15px;color:#111;">Ins</div>
<div class="a" style="left:1584px;top:1004px;width:24px;height:24px;background:#cce4f7;border:1px solid #5aa0e0"></div>
<svg style="left:1588px;top:1008px" width="16" height="16"><rect x="0.5" y="0.5" width="14" height="15" fill="#fff" stroke="#555"/><path d="M3 4H12M3 6.5H12M3 9H12M3 11.5H12" stroke="#555"/></svg>
<svg style="left:1614px;top:1009px" width="14" height="14"><path d="M0 1.5H13M0 4.5H13M0 7.5H13M0 10.5H13M0 13H13" stroke="#555"/></svg>
<svg style="left:1638px;top:1008px" width="16" height="16"><rect x="0.5" y="0.5" width="15" height="15" fill="#fff" stroke="#555"/><path d="M2 11.5H14" stroke="#555"/></svg>
<svg style="left:1663px;top:1009px" width="14" height="14"><path d="M0 1.5H4M2 4.5H13M3 7.5H13M0 10.5H4M3 13H13" stroke="#666"/></svg>
<div class="a" style="left:1692px;top:1015px;width:7px;height:1px;background:#666"></div>
<div class="a" style="left:1706px;top:1015px;width:110px;height:1px;background:#d4d4d4"></div>
<svg style="left:1753px;top:1008px" width="14" height="14"><circle cx="6.8" cy="7" r="4.8" fill="#fff" stroke="#777"/></svg>
<div class="t" style="left:1821px;top:1008px;font-size:14px;color:#666">+</div>
<div class="t" style="left:1849px;top:1008.3px;font-size:15px;color:#111;letter-spacing:-0.7px">100%</div>
<div class="t" style="left:1893px;top:1007px;font-size:12px;color:#555">&#187;</div>
<!-- TASKBAR -->
<svg style="left:19px;top:1044px" width="22" height="22"><path d="M1 3.2L9 2.1V10.2H1Z M10 2L21 0.5V10.2H10Z M1 11.2H9V19.3L1 18.2Z M10 11.2H21V20.9L10 19.4Z" fill="#fff"/></svg>
<svg style="left:78px;top:1043px" width="24" height="24"><circle cx="14.5" cy="8.9" r="6.8" fill="none" stroke="#fff" stroke-width="1.3"/><path d="M9.8 13.8L2.3 21.3" stroke="#fff" stroke-width="1.4"/></svg>
<svg style="left:139px;top:1044px" width="22" height="22"><path d="M1.5 0.5V3.5H13.5V0.5 M1.5 20.5V17.5H13.5V20.5 M19.5 0.5V20.5" fill="none" stroke="#fff" stroke-width="1"/><rect x="1.5" y="6.5" width="12" height="8" fill="none" stroke="#fff" stroke-width="1"/><rect x="18" y="7" width="3" height="3" fill="#fff"/></svg>
<svg style="left:199px;top:1040px" width="30" height="30"><defs><radialGradient id="kp" cx="0.3" cy="0.25" r="0.85"><stop offset="0" stop-color="#f6f8ff"/><stop offset="0.5" stop-color="#a8b8f4"/><stop offset="1" stop-color="#3c5ee0"/></radialGradient></defs><circle cx="14.6" cy="14.7" r="13.3" fill="url(#kp)" stroke="#f0f0ff" stroke-width="1.2"/><path d="M9.8 13V9.6Q9.8 5 14.6 5Q19.4 5 19.4 9.6V13" fill="none" stroke="#111" stroke-width="2"/><rect x="7" y="12.5" width="14.5" height="9.5" fill="#111"/><path d="M7.5 15.5H21M7.5 18.5H21" stroke="#3a4a80" stroke-width="0.9"/><rect x="13.6" y="14.5" width="1.6" height="4.5" fill="#8ab0f0"/></svg>
<div class="a" style="left:189px;top:1077px;width:51px;height:3px;background:#76b9ed"></div>
<svg style="left:261px;top:1042px" width="30" height="26"><path d="M0.5 2Q0.5 0.5 2 0.5H9L11 2.5H26.5Q28 2.5 28 4V8H0.5Z" fill="#e0a010"/><rect x="0.5" y="5" width="27.5" height="18" rx="1" fill="#fcd55a"/><path d="M5 23.5V12.5H23V23.5H19V17H9V23.5Z" fill="#2a8de0"/></svg>
<div class="a" style="left:251px;top:1077px;width:51px;height:3px;background:#76b9ed"></div>
<svg style="left:323px;top:1040px" width="30" height="30"><defs><linearGradient id="tg" x1="0" y1="0" x2="0" y2="1"><stop offset="0" stop-color="#37aee2"/><stop offset="1" stop-color="#1e96c8"/></linearGradient></defs><circle cx="14.6" cy="14.5" r="13.5" fill="url(#tg)"/><path d="M6 14.5L22 8L19.5 22L14 17.5L11.5 20.5V16.5L19 10L10 15.5Z" fill="#fff"/></svg>
<svg style="left:384px;top:1039px" width="32" height="32"><circle cx="15.9" cy="15.8" r="15" fill="#1da462"/><path d="M15.9 15.8L2.9 8.3A15 15 0 0 1 28.9 8.3Z" fill="#dd4437"/><path d="M15.9 15.8L28.9 8.3A15 15 0 0 1 15.9 30.8Z" fill="#ffcd46"/><path d="M15.9 15.8L2.9 8.3L9.5 20Z" fill="#dd4437"/><path d="M15.9 15.8L28.9 8.3H15.9Z" fill="#ffcd46"/><circle cx="15.9" cy="15.8" r="7" fill="#fff"/><circle cx="15.9" cy="15.8" r="5.6" fill="#4c8bf5"/></svg>
<svg style="left:447px;top:1040px" width="30" height="30"><defs><linearGradient id="eg1" x1="0.1" y1="0" x2="0.9" y2="0.7"><stop offset="0" stop-color="#29b0ec"/><stop offset="0.5" stop-color="#2cc4b4"/><stop offset="1" stop-color="#6ae060"/></linearGradient><linearGradient id="eg2" x1="0" y1="0" x2="0.4" y2="1"><stop offset="0" stop-color="#1a9ae8"/><stop offset="1" stop-color="#0c64c0"/></linearGradient></defs><circle cx="15" cy="15" r="15" fill="url(#eg2)"/><path d="M2.2 7.5A15 15 0 0 1 30 15.5Q30 19.5 27.5 21Q23 22 19.5 19Q21.5 15 18.5 10.5Q12.5 4.5 2.2 7.5Z" fill="url(#eg1)"/><path d="M11.5 17Q10.5 25 17 29Q23 29.5 27.5 23.5Q22 25 17.5 22.5Q13 20 11.5 17Z" fill="#0c52a0"/><circle cx="16.2" cy="15.6" r="4.3" fill="#111"/><path d="M15.5 19.5Q21 22.5 28 21Q25.5 23.7 21.5 23.7Q16.5 23.5 13.5 19Z" fill="#111"/></svg>
<div class="a" style="left:437px;top:1077px;width:51px;height:3px;background:#76b9ed"></div>
<div class="a" style="left:494px;top:1030px;width:61px;height:50px;background:#333333"></div>
<div class="a" style="left:509px;top:1040px;width:30px;height:30px;background:linear-gradient(135deg,#f85858,#c81818 60%,#d82020);border:2px solid #f6b4b4"></div>
<div class="t" style="left:508px;top:1045px;width:31px;text-align:center;font-size:22px;font-weight:bold;color:#fff">T</div>
<div class="a" style="left:494px;top:1077px;width:61px;height:3px;background:#76b9ed"></div>
<svg style="left:1550px;top:1049px" width="18" height="10"><path d="M1 9L8.5 1.5L16 9" fill="none" stroke="#fff" stroke-width="1.2"/></svg>
<svg style="left:1580px;top:1045px" width="18" height="20"><rect x="1" y="4.5" width="10" height="10" rx="1.5" fill="none" stroke="#ddd" stroke-width="1.2"/><path d="M11 8L15.5 5.5V13.5L11 11" fill="none" stroke="#ddd" stroke-width="1.2"/><path d="M4 2Q6 0.8 8 2M4 17Q6 18.2 8 17" fill="none" stroke="#ddd"/></svg>
<svg style="left:1607px;top:1046px" width="22" height="16"><path d="M3 14Q0 14 0.5 11Q1 8.5 4 8.5Q5 3.5 10 3.5Q13.5 3.5 15 6.5Q20 6 21 10.5Q21.5 14 18 14Z" fill="#ddd"/><path d="M4 8.5Q5 3.5 10 3.5Q13.5 3.5 15 6.5Q11 7 10 10Z" fill="#aaa"/></svg>
<svg style="left:1637px;top:1046px" width="22" height="18"><path d="M3 1V4M6 1V4M2 4H7V7Q4.5 9 2 7Z M4.5 8V11" stroke="#ddd" fill="none"/><rect x="3.5" y="5.5" width="15" height="9" fill="none" stroke="#ddd" stroke-width="1.2"/><rect x="5" y="7" width="12" height="6" fill="#ddd"/><rect x="19" y="8" width="2" height="4" fill="#ddd"/></svg>
<svg style="left:1667px;top:1045px" width="22" height="20"><rect x="1.5" y="1.5" width="4" height="4" fill="none" stroke="#ddd"/><path d="M3.5 5.5V19" stroke="#ddd"/><path d="M5.5 2.5H19.5V14.5H5.5" fill="none" stroke="#ddd" stroke-width="1.2"/><path d="M12.5 14.5V18M8 18.5H17" stroke="#ddd"/></svg>
<svg style="left:1697px;top:1045px" width="22" height="20"><path d="M1 7H4L8.5 2.5V17.5L4 13H1Z" fill="none" stroke="#ddd" stroke-width="1.1"/><path d="M11 7Q13 10 11 13M13.5 5Q17 10 13.5 15M16 3Q21 10 16 17" fill="none" stroke="#ddd" stroke-width="1.1"/></svg>
<div class="t" style="left:1731px;top:1048.3px;font-size:15px;color:#fff;letter-spacing:-1px">ENG</div>
<div class="t" style="left:1776px;top:1036.3px;width:70px;text-align:center;font-size:15px;color:#fff">20:14</div>
<div class="t" style="left:1777px;top:1059.3px;font-size:15px;color:#fff;letter-spacing:-0.7px">31.03.2023</div>
<svg style="left:1868px;top:1044px" width="24" height="22"><path d="M0.5 0.5H19.5V19.5H6L3 22V19.5H0.5Z" fill="none" stroke="#fff" stroke-width="1.1"/><path d="M17 13.5A3.5 3.5 0 1 1 13 17Q17 17 17 13.5Z" fill="#fff"/></svg>
<div class="a" style="left:1914px;top:1030px;width:1px;height:50px;background:#444"></div>
<!-- DIALOG -->
<div class="a" style="left:717px;top:387px;width:486px;height:253px;background:#f0f0f0;border:1px solid #6c6c6c;box-shadow:0 4px 16px rgba(0,0,0,0.32)"></div>
<div class="a" style="left:718px;top:388px;width:484px;height:31px;background:#fff"></div>
<div class="t" style="left:721px;top:396.3px;font-size:15px;color:#111;">Warning</div>
<svg style="left:1174px;top:396px" width="14" height="14"><path d="M0.5 0.5L13.5 13.5M13.5 0.5L0.5 13.5" stroke="#111" stroke-width="1.2"/></svg>
<div class="t" style="left:732px;top:441.3px;font-size:15px;color:#111;">When you save this document in plain-text format, all formatting</div>
<div class="t" style="left:732px;top:461.3px;font-size:15px;color:#111;">and certain content (e.g. objects and fields) will be lost.</div>
<div class="a" style="left:788px;top:551px;width:13px;height:13px;background:#fff;border:1px solid #333"></div>
<div class="a" style="left:806px;top:547px;width:212px;height:21px;border:1px dotted #333"></div>
<div class="t" style="left:808px;top:550.3px;font-size:15px;color:#111;">Do not show this warning again</div>
<div class="a" style="left:808px;top:566px;width:11px;height:1px;background:#111"></div>
<div class="a" style="left:828px;top:587px;width:124px;height:35px;background:#e1e1e1;border:2px solid #0078d7"></div>
<div class="t" style="left:828px;top:597.3px;width:124px;text-align:center;font-size:15px;color:#111">OK</div>
<div class="a" style="left:966px;top:587px;width:124px;height:35px;background:#e1e1e1;border:1px solid #adadad"></div>
<div class="t" style="left:966px;top:597.3px;width:124px;text-align:center;font-size:15px;color:#111">Cancel</div>
</body></html>
